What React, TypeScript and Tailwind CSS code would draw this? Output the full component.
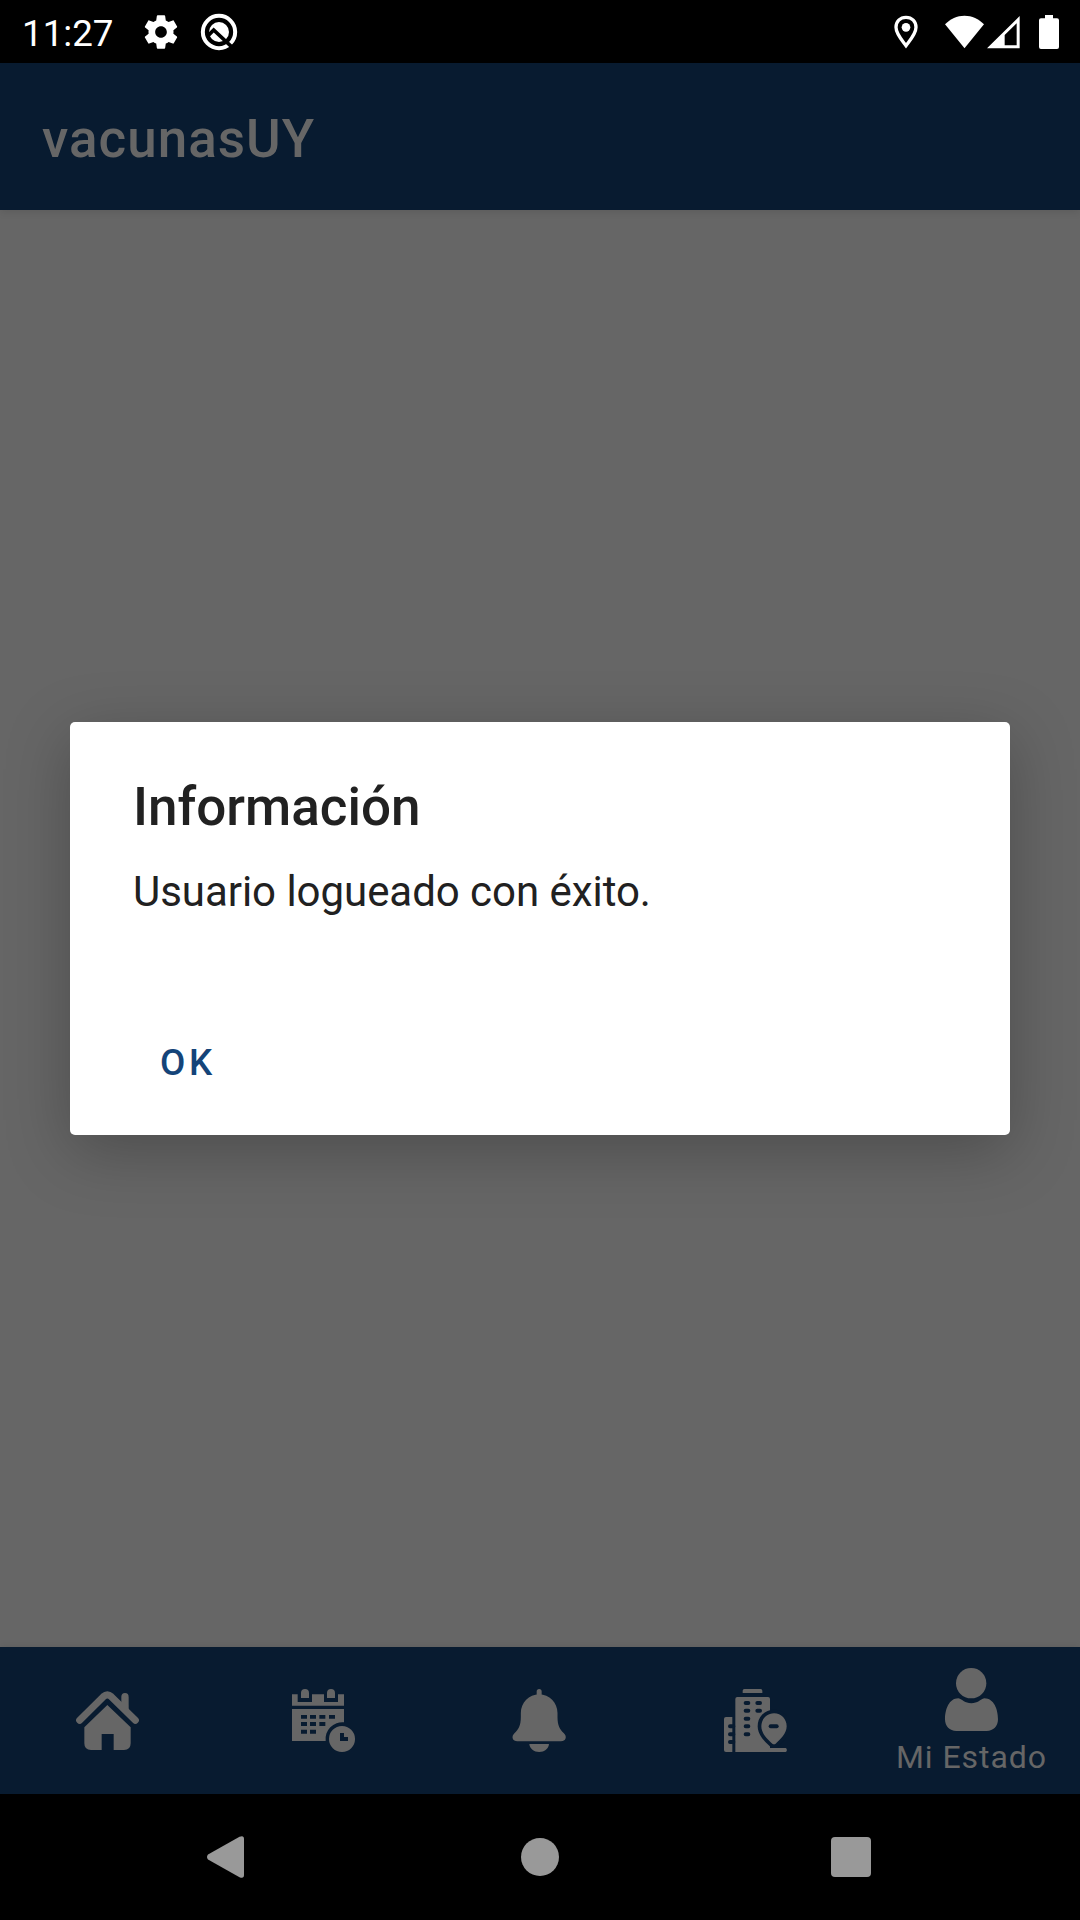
import type { ReactNode } from "react";

function StatusBar() {
  return (
    <div className="flex h-[63px] shrink-0 items-center bg-black pr-[21px] pl-[22px] text-white">
      <span className="mt-[5px] w-[119px] text-[36.75px] leading-none">11:27</span>
      <svg className="h-[40px] w-[40px]" viewBox="0 0 24 24" fill="currentColor">
        <path d="M19.43 12.98c.04-.32.07-.64.07-.98s-.03-.66-.07-.98l2.11-1.65c.19-.15.24-.42.12-.64l-2-3.46c-.12-.22-.39-.3-.61-.22l-2.49 1c-.52-.4-1.08-.73-1.69-.98l-.38-2.65C14.46 2.18 14.25 2 14 2h-4c-.25 0-.46.18-.49.42l-.38 2.65c-.61.25-1.17.59-1.69.98l-2.49-1c-.23-.09-.49 0-.61.22l-2 3.46c-.13.22-.07.49.12.64l2.11 1.65c-.04.32-.07.65-.07.98s.03.66.07.98l-2.11 1.65c-.19.15-.24.42-.12.64l2 3.46c.12.22.39.3.61.22l2.49-1c.52.4 1.08.73 1.69.98l.38 2.65c.03.24.24.42.49.42h4c.25 0 .46-.18.49-.42l.38-2.65c.61-.25 1.17-.59 1.69-.98l2.49 1c.23.09.49 0 .61-.22l2-3.46c.12-.22.07-.49-.12-.64l-2.11-1.65zM12 15.5c-1.93 0-3.5-1.57-3.5-3.5s1.57-3.5 3.5-3.5 3.5 1.57 3.5 3.5-1.57 3.5-3.5 3.5z" />
      </svg>
      <svg className="ml-[19px] h-[38px] w-[38px]" viewBox="0 0 114 114">
        <circle cx="57" cy="57" r="48.500" fill="none" stroke="#fff" strokeWidth="12" />
        <circle cx="57" cy="57" r="30" fill="#fff" />
        <path d="M22 70L41 51L100 106" fill="none" stroke="#000" strokeWidth="11" />
      </svg>
      <svg className="ml-auto h-[34px] w-[24px]" viewBox="0 0 72 102">
        <path d="M36 7C18 7 6 20 6 37C6 57 24 76 36 92C48 76 66 57 66 37C66 20 54 7 36 7Z" fill="none" stroke="#fff" strokeWidth="10" />
        <circle cx="36" cy="37" r="13" fill="#fff" />
      </svg>
      <svg className="ml-[27px] h-[34px] w-[39px]" viewBox="0 0 117 102">
        <path d="M58.5 100L0 28C16 11 36 2 58.5 2S101 11 117 28Z" fill="#fff" />
      </svg>
      <svg className="ml-[3px] h-[34px] w-[33px]" viewBox="0 0 99 102">
        <path fillRule="evenodd" d="M98 3V100H0ZM89 25L53 60V91H89Z" fill="#fff" />
      </svg>
      <svg className="ml-[19px] h-[34px] w-[20px]" viewBox="0 0 60 102">
        <path d="M18 0H42V10H54Q60 10 60 16V96Q60 102 54 102H6Q0 102 0 96V16Q0 10 6 10H18Z" fill="#fff" />
      </svg>
    </div>
  );
}

function HomeIcon() {
  return (
    <svg className="h-[63px] w-[63px]" viewBox="0 0 189 189" fill="currentColor">
      <path d="M11 94L82 23Q94 12 106 23L178 94" fill="none" stroke="currentColor" strokeWidth="21" strokeLinecap="round" />
      <path d="M136 24Q136 12 147 12T158 24V68L136 46Z" />
      <path d="M94 48L164 115V163Q164 183 144 183H113V135H77V183H45Q25 183 25 163V115Z" />
    </svg>
  );
}

function CalendarIcon() {
  return (
    <svg className="h-[63px] w-[63px]" viewBox="0 0 189 189" fill="currentColor">
      <path d="M0 16H17V39H60V16H96V39H138V16H156V50H0Z" />
      <path d="M27 27V12Q27 0 39 0T51 12V27ZM105 27V12Q105 0 117 0T129 12V27Z" />
      <path
        fillRule="evenodd"
        d="M0 60H156V100A50 50 0 0 0 101 156H0ZM27 78V89H45V78ZM54 78V89H72V78ZM82 78V89H100V78ZM111 78V89H129V78ZM27 99V111H45V99ZM54 99V111H72V99ZM82 99V111H100V99ZM27 122V134H45V122ZM54 122V134H72V122Z"
      />
      <path fillRule="evenodd" d="M150 111A39 39 0 1 1 150 189A39 39 0 1 1 150 111ZM144 132V156H168V144H156V132Z" />
    </svg>
  );
}

function BellIcon() {
  return (
    <svg className="h-[63px] w-[63px]" viewBox="0 0 189 189" fill="currentColor">
      <path d="M86 22V8Q86 0 93.500 0T101 8V22Z" />
      <path d="M93.500 16C63 16 38.500 41 38.500 72V84C38.500 110 31 122 20 132C8 143 14 157 28 157H159C173 157 179 143 167 132C156 122 148.500 110 148.500 84V72C148.500 41 124 16 93.500 16Z" />
      <path d="M64 165H123C122 179 109 189 93.500 189S65 179 64 165Z" />
    </svg>
  );
}

function BuildingIcon() {
  return (
    <svg className="h-[63px] w-[63px]" viewBox="0 0 189 189" fill="currentColor">
      <path d="M56 12V5Q56 0 61 0H110Q115 0 115 5V12Z" />
      <path d="M25 84V189H6Q0 189 0 183V90Q0 84 6 84Z" />
      <path d="M40 24H132Q138 24 138 30V177H183Q188 177 188 183T183 189H34V30Q34 24 40 24Z" />
      <path
        d="M65 42H73M65 65H73M65 89H73M65 112H73M65 136H73M100 42H108M100 65H108M18 112H28M18 136H28M18 159H28"
        className="stroke-[#081b30]"
        strokeWidth="12"
        strokeLinecap="round"
      />
      <path d="M150 73C128 73 112 90 112 112C112 134 132 152 145 164Q150 168 155 164C168 152 188 134 188 112C188 90 172 73 150 73Z" className="stroke-[#081b30]" strokeWidth="22" paintOrder="stroke" />
      <path d="M140 177H183Q188 177 188 183T183 189H130Z" />
      <path d="M140 112H158" className="stroke-[#081b30]" strokeWidth="12" strokeLinecap="round" />
    </svg>
  );
}

function UserIcon() {
  return (
    <svg className="h-[63px] w-[63px]" viewBox="0 0 189 189" fill="currentColor">
      <circle cx="93.500" cy="45.500" r="45.500" />
      <path d="M55 91C68 94 74 106 94 106C114 106 120 94 133 91C162 91 174 125 174 154C174 175 160 189 140 189H49C29 189 15 175 15 154C15 125 27 91 55 91Z" />
    </svg>
  );
}

function Tab({ icon, label }: { icon: ReactNode; label?: string }) {
  return (
    <div className={label ? "flex flex-1 flex-col items-center pt-[21px] pr-px" : "flex flex-1 flex-col items-center justify-center pr-px"}>
      {icon}
      {label && <span className="mt-2 text-[32px] leading-[36px] tracking-[0.03em] whitespace-nowrap">{label}</span>}
    </div>
  );
}

function SystemNav() {
  return (
    <div className="flex h-[126px] shrink-0 items-center bg-black pl-[206px] text-[#999]">
      <svg className="h-[42px] w-[38px]" viewBox="0 0 38 42" fill="currentColor">
        <path d="M2 18.500L33.500 .8Q38 -1 38 3V39Q38 43 33.500 41.200L2 23.500Q0 21 2 18.500Z" />
      </svg>
      <div className="ml-[277px] h-[38px] w-[38px] rounded-full bg-[#999]" />
      <div className="ml-[272px] h-10 w-10 rounded bg-[#999]" />
    </div>
  );
}

function Dialog() {
  return (
    <div className="absolute inset-x-0 top-[63px] bottom-[126px] flex items-center justify-center">
      <div className="flex h-[413px] w-[940px] flex-col items-start rounded-[5px] bg-white px-[63px] pt-[54px] text-[#212121] shadow-[0_16px_64px_rgba(0,0,0,0.25)]">
        <h2 className="text-[53px] leading-[62px] font-medium">Información</h2>
        <p className="mt-[29px] text-[42px] leading-[50px] tracking-[-0.001em]">Usuario logueado con éxito.</p>
        <button className="mt-[124px] ml-[27px] text-[36.75px] leading-[44px] font-medium tracking-[0.1em] text-[#144479]">OK</button>
      </div>
    </div>
  );
}

export default function App() {
  return (
    <div className="relative flex h-[1920px] w-[1080px] flex-col overflow-hidden bg-[#666] font-[Roboto,sans-serif]">
      <StatusBar />
      <header className="flex h-[147px] shrink-0 items-center bg-[#081b30] pt-[6px] pl-[42px] text-[53px] font-medium tracking-[0.019em] text-[#666] shadow-[0_2px_8px_rgba(0,0,0,0.1)]">
        vacunasUY
      </header>
      <main className="flex-1" />
      <nav className="flex h-[147px] shrink-0 bg-[#081b30] text-[#666] shadow-[0_0_8px_rgba(0,0,0,0.1)]">
        <Tab icon={<HomeIcon />} />
        <Tab icon={<CalendarIcon />} />
        <Tab icon={<BellIcon />} />
        <Tab icon={<BuildingIcon />} />
        <Tab icon={<UserIcon />} label="Mi Estado" />
      </nav>
      <SystemNav />
      <Dialog />
    </div>
  );
}
